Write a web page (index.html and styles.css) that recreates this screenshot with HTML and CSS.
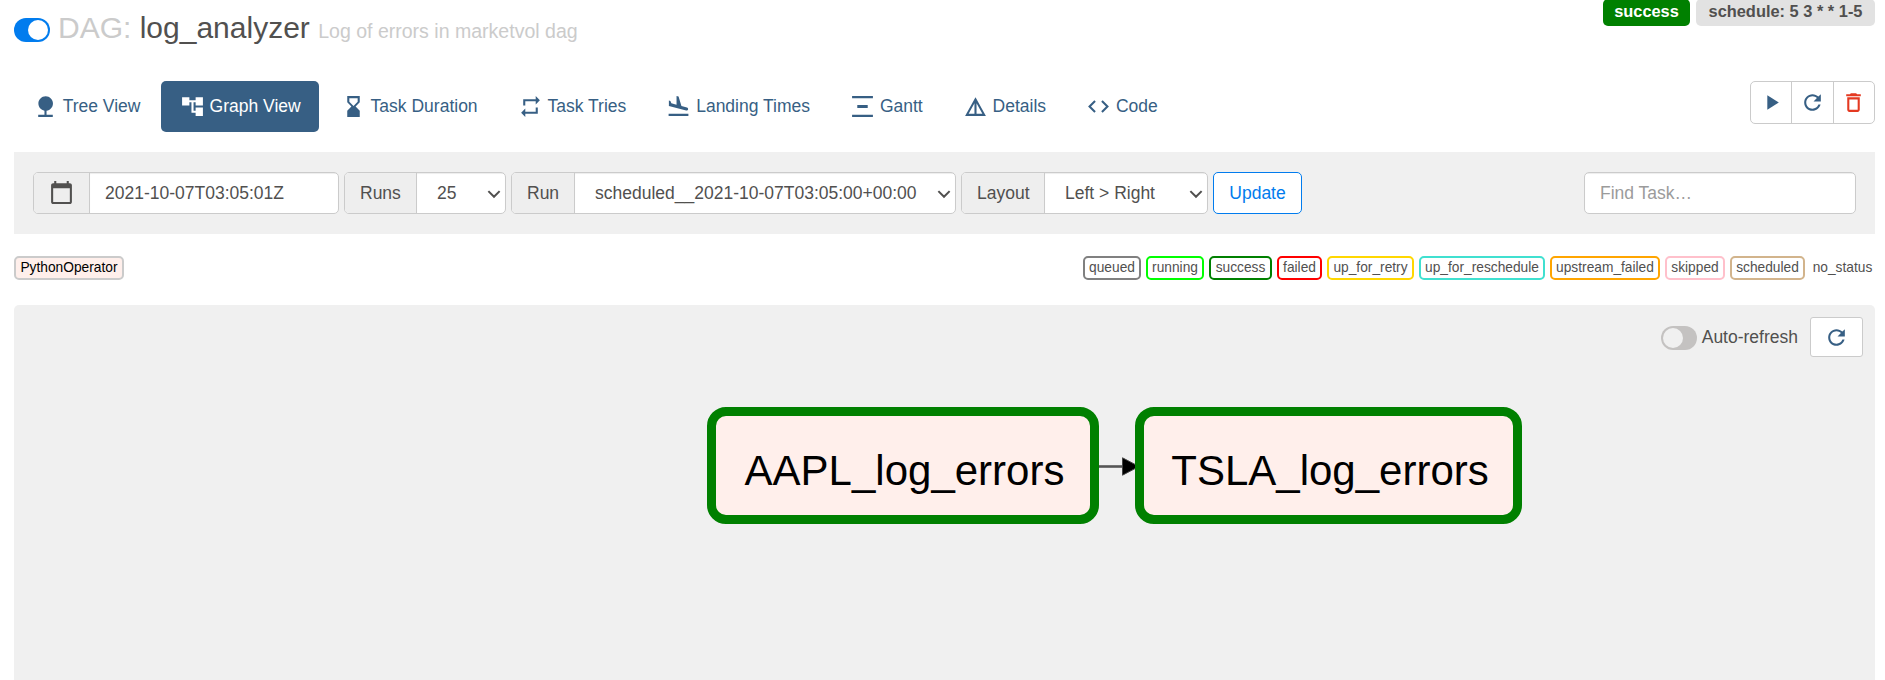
FILE: index.html
```
<!DOCTYPE html>
<html lang="en">
<head>
<meta charset="utf-8">
<title>log_analyzer - Graph View</title>
<link rel="stylesheet" href="styles.css">
</head>
<body>
<header class="head">
  <h3 class="title"><span class="switch on"><i></i></span><span class="name"><span class="muted">DAG:</span> log_analyzer <small class="muted">Log of errors in marketvol dag</small></span></h3>
  <div class="badges"><span class="badge ok">success</span><span class="badge sched">schedule: 5 3 * * 1-5</span></div>
</header>
<div class="navrow">
  <nav class="pills">
    <a class="pill"><svg class="ico" viewBox="0 0 24 24"><path d="M13 16.12c3.47-.41 6.17-3.36 6.17-6.95 0-3.87-3.13-7-7-7s-7 3.13-7 7c0 3.47 2.52 6.34 5.83 6.89V20H5v2h14v-2h-6v-3.88z"/></svg>Tree View</a>
    <a class="pill active"><svg class="ico" viewBox="0 0 24 24"><path d="M22 11V3h-7v3H9V3H2v8h7V8h2v10h4v3h7v-8h-7v3h-2V8h2v3z"/></svg>Graph View</a>
    <a class="pill"><svg class="ico" viewBox="0 0 24 24"><path d="M18 22l-.01-6L14 12l3.99-4.01L18 2H6v6l4 4-4 3.99V22h12zM8 7.5V4h8v3.5l-4 4-4-4z"/></svg>Task Duration</a>
    <a class="pill"><svg class="ico" viewBox="0 0 24 24"><path d="M7 7h10v3l4-4-4-4v3H5v6h2V7zm10 10H7v-3l-4 4 4 4v-3h12v-6h-2v4z"/></svg>Task Tries</a>
    <a class="pill"><svg class="ico" viewBox="0 0 24 24"><path d="M2.5 19h19v2h-19zm16.84-3.15c.8.21 1.62-.26 1.84-1.06.21-.8-.26-1.62-1.06-1.84l-5.31-1.42-2.76-9.02L10.12 2v8.28L5.15 8.95l-.93-2.32-1.45-.39v5.17l16.57 4.44z"/></svg>Landing Times</a>
    <a class="pill"><svg class="ico" viewBox="0 0 24 24"><path d="M2 2h20v2H2zM7 10.500h10v3H7zM2 20h20v2H2z"/></svg>Gantt</a>
    <a class="pill"><svg class="ico" viewBox="0 0 24 24"><path d="M12 3L2 21h20L12 3zm1 5.920L18.600 19H13V8.920zm-2 0V19H5.400L11 8.920z"/></svg>Details</a>
    <a class="pill"><svg class="ico" viewBox="0 0 24 24"><path d="M9.400 16.600L4.800 12l4.600-4.600L8 6l-6 6 6 6 1.400-1.400zm5.200 0l4.600-4.600-4.600-4.600L16 6l6 6-6 6-1.400-1.400z"/></svg>Code</a>
  </nav>
  <div class="actions">
    <span class="act"><svg class="ico" viewBox="0 0 24 24"><path d="M8 5v14l11-7z"/></svg></span>
    <span class="act"><svg class="ico" viewBox="0 0 24 24"><path d="M17.650 6.350C16.200 4.900 14.210 4 12 4c-4.420 0-7.990 3.580-7.990 8s3.570 8 7.990 8c3.730 0 6.840-2.550 7.730-6h-2.080c-.82 2.330-3.040 4-5.650 4-3.310 0-6-2.690-6-6s2.690-6 6-6c1.660 0 3.140.69 4.220 1.780L13 11h7V4l-2.350 2.350z"/></svg></span>
    <span class="act del"><svg class="ico" viewBox="0 0 24 24"><path d="M6 19c0 1.100.9 2 2 2h8c1.100 0 2-.9 2-2V7H6v12zM8 9h8v10H8V9zm7.500-5l-1-1h-5l-1 1H5v2h14V4z"/></svg></span>
  </div>
</div>
<div class="filter">
  <div class="group date"><span class="addon"><svg class="cal" viewBox="0 0 24 24"><path d="M20 3h-1V1h-2v2H7V1H5v2H4c-1.100 0-2 .9-2 2v16c0 1.100.9 2 2 2h16c1.100 0 2-.9 2-2V5c0-1.100-.9-2-2-2zm0 18H4V8h16v13z"/></svg></span><span class="field">2021-10-07T03:05:01Z</span></div>
  <div class="group runs"><span class="addon">Runs</span><span class="field sel">25<svg class="chev" viewBox="0 0 12 8"><path d="M1 1l5 5 5-5"/></svg></span></div>
  <div class="group run"><span class="addon">Run</span><span class="field sel">scheduled__2021-10-07T03:05:00+00:00<svg class="chev" viewBox="0 0 12 8"><path d="M1 1l5 5 5-5"/></svg></span></div>
  <div class="group layout"><span class="addon">Layout</span><span class="field sel">Left &gt; Right<svg class="chev" viewBox="0 0 12 8"><path d="M1 1l5 5 5-5"/></svg></span></div>
  <span class="update">Update</span>
  <div class="group search"><span class="field">Find Task…</span></div>
</div>
<div class="legend">
  <span class="tag op">PythonOperator</span>
  <span class="tag queued">queued</span><span class="tag running">running</span><span class="tag success">success</span><span class="tag failed">failed</span><span class="tag retry">up_for_retry</span><span class="tag resched">up_for_reschedule</span><span class="tag upfail">upstream_failed</span><span class="tag skipped">skipped</span><span class="tag scheduled">scheduled</span><span class="tag none">no_status</span>
</div>
<main class="graph">
  <div class="refresh"><span class="switch"><i></i></span><span class="auto">Auto-refresh</span><span class="rbtn"><svg class="ico" viewBox="0 0 24 24"><path d="M17.650 6.350C16.200 4.900 14.210 4 12 4c-4.420 0-7.990 3.580-7.990 8s3.570 8 7.990 8c3.730 0 6.840-2.550 7.730-6h-2.080c-.82 2.330-3.040 4-5.650 4-3.310 0-6-2.690-6-6s2.690-6 6-6c1.660 0 3.140.69 4.220 1.780L13 11h7V4l-2.350 2.350z"/></svg></span></div>
  <div class="dag">
    <div class="node a">AAPL_log_errors</div>
    <svg class="edge" viewBox="0 0 36 20"><path class="line" d="M0 10.500H26"/><path class="tip" d="M23.500 1.800L40 10.500 23.500 19.200z"/></svg>
    <div class="node t">TSLA_log_errors</div>
  </div>
</main>
</body>
</html>
```
FILE: styles.css
```
* { box-sizing: border-box; }
body { margin: 0; padding: 0 10px 0 14px; height: 680px; overflow: hidden; display: flex; flex-direction: column; background: #fff; color: #51504f; font: 17.5px/25px "Liberation Sans", Arial, sans-serif; }
svg { display: block; fill: currentColor; flex: none; }
.head { display: flex; justify-content: space-between; height: 81px; }
.title { display: flex; margin: 11px 0 0; height: 33px; font-size: 30px; font-weight: 400; line-height: 33px; }
.title .name { margin-left: 8px; white-space: nowrap; }
.title small { font-size: 19.55px; }
.muted { color: #cbcbcb; }
.switch { width: 36px; height: 24px; border-radius: 12px; background: #c4c2c1; padding: 2px; display: flex; }
.switch i { width: 20px; height: 20px; border-radius: 50%; background: #f0f0f0; }
.switch.on { background: #017cee; justify-content: flex-end; margin-top: 7px; }
.switch.on i { background: #fff; }
.badges { display: flex; gap: 6px; margin-top: -1px; }
.badge { height: 27px; border-radius: 5px; font-weight: 700; font-size: 16.4px; line-height: 24px; text-align: center; white-space: nowrap; }
.ok { background: #008000; color: #fff; width: 87px; }
.sched { background: #e2e2e2; width: 179px; }
.navrow { display: flex; justify-content: space-between; height: 71px; }
.pills { display: flex; gap: 2.5px; height: 51px; }
.pill { display: flex; align-items: center; gap: 4.9px; padding: 0 18.75px; border-radius: 5px; color: #375f84; white-space: nowrap; }
.pill:first-child { padding-right: 18px; }
.active { background: #375f84; color: #fff; }
.ico { width: 25px; height: 25px; }
.actions { display: flex; width: 125px; height: 43px; border: 1px solid #cbcbcb; border-radius: 5px; color: #375f84; }
.act { flex: 1; display: flex; align-items: center; justify-content: center; padding-bottom: 1px; }
.act + .act { border-left: 1px solid #cbcbcb; }
.del { color: #e43921; }
.filter { display: flex; gap: 5px; height: 82px; padding: 20px 19px; background: #f0f0f0; flex: none; }
.group { display: flex; height: 42px; border: 1px solid #cbcbcb; border-radius: 5px; background: #fff; overflow: hidden; white-space: nowrap; line-height: 40px; }
.addon { background: #eee; border-right: 1px solid #cbcbcb; padding-left: 15px; flex: none; }
.field { flex: 1; display: flex; justify-content: space-between; align-items: flex-start; padding-left: 15px; box-shadow: inset 0 1px 1px rgba(0,0,0,.075); }
.sel { padding-left: 20px; padding-right: 4px; }
.chev { width: 14px; height: 9px; margin-top: 17px; fill: none; stroke: #51504f; stroke-width: 1.8; }
.date { width: 306px; }
.date .addon { width: 56px; padding: 7px 0 0 15px; }
.cal { width: 25px; height: 25px; }
.runs { width: 162px; }
.runs .addon { width: 72px; }
.run { width: 445px; }
.run .addon { width: 63px; }
.layout { width: 247px; }
.layout .addon { width: 83px; }
.update { width: 89px; height: 42px; border: 1px solid #017cee; border-radius: 5px; background: #fff; color: #017cee; text-align: center; line-height: 40px; }
.search { width: 272px; margin-left: auto; }
.search .field { color: #9b9b9b; }
.legend { display: flex; gap: 5px; padding-top: 22px; height: 71px; flex: none; }
.tag { --line: transparent; height: 24px; border: 2px solid var(--line); border-radius: 5px; padding: 0; color: #51504f; font-size: 13.75px; line-height: 20px; text-align: center; white-space: nowrap; }
.op { --line: #cbcbcb; background: #ffefeb; color: #000; margin-right: auto; width: 110px; }
.queued { --line: gray; width: 58px; }
.running { --line: lime; width: 58px; }
.success { --line: green; width: 63px; }
.failed { --line: red; width: 45px; }
.retry { --line: gold; width: 87px; }
.resched { --line: turquoise; width: 126px; }
.upfail { --line: orange; width: 110px; }
.skipped { --line: pink; width: 60px; }
.scheduled { --line: tan; width: 75px; }
.none { width: 65px; }
.graph { flex: 1; background: #f0f0f0; border-radius: 5px 5px 0 0; }
.refresh { display: flex; justify-content: flex-end; padding: 12px 12px 0 0; height: 102px; }
.refresh .switch { margin-top: 9px; }
.auto { margin: 8px 12px 0 5px; line-height: 25px; }
.rbtn { width: 53px; height: 40px; border: 1px solid #cbcbcb; border-radius: 3px; background: #fff; color: #375f84; display: flex; align-items: center; justify-content: center; }
.dag { display: flex; align-items: center; padding-left: 693px; height: 117px; }
.node { height: 117px; border: 9px solid #008000; border-radius: 19px; background: #ffefeb; color: #000; font-size: 42px; line-height: 109px; padding-left: 3px; text-align: center; white-space: nowrap; }
.a { width: 392px; }
.t { width: 387px; }
.edge { width: 36px; height: 20px; }
.line { stroke: #555; stroke-width: 2.600; }
.tip { fill: #000; stroke: #444; stroke-width: 1; }
```
